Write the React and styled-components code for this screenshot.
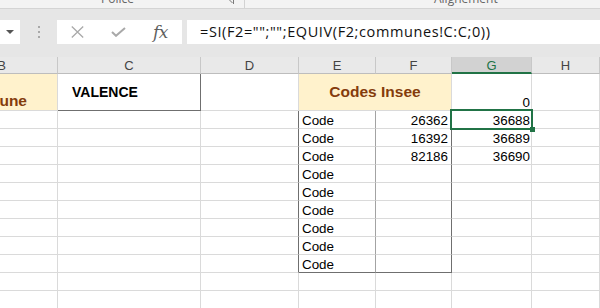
import React from 'react';
import styled, { createGlobalStyle } from 'styled-components';

const GlobalStyle = createGlobalStyle`
  body {
    margin: 0;
    background: #fff;
    font-family: "Liberation Sans", Arial, sans-serif;
  }
`;

const Page = styled.div`
  width: 600px;
  height: 308px;
  overflow: hidden;
  background: #fff;
`;

const RibbonStrip = styled.div`
  display: flex;
  height: 8px;
  background: #f3f3f3;
  border-bottom: 1px solid #d4d4d4;
  overflow: hidden;
`;

const RibbonGroup = styled.div`
  display: flex;
  align-items: flex-start;
  width: ${p => p.$w}px;
  padding-left: ${p => p.$pl}px;
  box-sizing: border-box;
  border-right: ${p => (p.$sep ? '1px solid #d2d2d2' : 'none')};
`;

const GroupLabel = styled.span`
  font-family: "Open Sans", "Liberation Sans", sans-serif;
  font-size: 12px;
  line-height: 12px;
  margin-top: -7px;
  color: #666;
`;

const Launcher = styled.svg`
  margin-left: auto;
  margin-right: 10px;
  margin-top: -2px;
`;

const FormulaArea = styled.div`
  display: flex;
  align-items: flex-start;
  height: 48px;
  padding-top: 11px;
  box-sizing: border-box;
  background: #e6e6e6;
`;

const NameBox = styled.div`
  width: 20px;
  height: 24px;
  background: #fff;
  display: flex;
  align-items: center;
  justify-content: center;
`;

const Grip = styled.div`
  width: 37px;
  height: 24px;
  display: flex;
  flex-direction: column;
  align-items: center;
  justify-content: center;
  gap: 3px;
`;

const GripDot = styled.span`
  width: 2px;
  height: 2px;
  background: #a8a8a8;
`;

const ButtonBox = styled.div`
  display: flex;
  width: 125px;
  height: 24px;
  background: #fff;
`;

const IconSlot = styled.div`
  width: ${p => p.$w}px;
  display: flex;
  align-items: center;
  justify-content: center;
`;

const Fx = styled.span`
  font-family: "DejaVu Serif", "Liberation Serif", serif;
  font-style: italic;
  font-size: 17px;
  line-height: 20px;
  color: #5f5f5f;
  letter-spacing: -0.5px;
`;

const FormulaInput = styled.div`
  flex: 1;
  height: 24px;
  margin-left: 5px;
  background: #fff;
  padding-left: 13px;
  font-family: "Open Sans", "Liberation Sans", sans-serif;
  font-size: 14.5px;
  letter-spacing: 0.6px;
  line-height: 24px;
  color: #111;
  white-space: nowrap;
`;

const Grid = styled.div`
  display: grid;
  grid-template-columns: 112px 143px 98px 77px 76px 80px 1fr;
  grid-template-rows: 17px 37px repeat(11, 18px);
  margin-left: -54px;
`;

const HeaderCell = styled.div`
  box-sizing: border-box;
  display: flex;
  align-items: center;
  justify-content: center;
  font-size: 13px;
  color: ${p => (p.$active ? '#217346' : '#444')};
  background: ${p => (p.$active ? '#d2d2d2' : '#e9e9e9')};
  border-right: 1px solid #c8c8c8;
  border-bottom: ${p => (p.$active ? '2px solid #217346' : '1px solid #bdbdbd')};
  padding-top: 1px;
`;

const Cell = styled.div`
  box-sizing: border-box;
  position: relative;
  display: flex;
  align-items: ${p => p.$valign || 'flex-end'};
  justify-content: ${p => p.$align || 'flex-start'};
  padding: 0 ${p => p.$pr ?? 3}px 0 ${p => p.$pl ?? 3}px;
  border-right: 1px solid ${p => p.$r || '#dadada'};
  border-bottom: 1px solid ${p => p.$b || '#dadada'};
  background: ${p => p.$bg || '#fff'};
  grid-column: ${p => (p.$span ? `span ${p.$span}` : 'auto')};
  font-size: 13.4px;
  line-height: 15px;
  white-space: nowrap;
  color: #000;
`;

const Title = styled.span`
  font-weight: bold;
  font-size: ${p => p.$size}px;
  color: ${p => p.$color};
  line-height: 18px;
`;

const Selection = styled.div`
  position: absolute;
  top: -2px;
  left: -2px;
  right: -2px;
  bottom: -2px;
  border: 2px solid #217346;
  z-index: 2;
`;

const Handle = styled.div`
  position: absolute;
  right: -4px;
  bottom: -4px;
  width: 5px;
  height: 5px;
  background: #217346;
`;

const DARK = '#6f6f6f';
const MID = '#a3a3a3';
const BEIGE = '#fff2cc';
const BROWN = '#843c0c';

const columns = ['B', 'C', 'D', 'E', 'F', 'G', 'H'];

const codes = [
  { f: '26362', g: '36688', sel: true },
  { f: '16392', g: '36689' },
  { f: '82186', g: '36690' },
  {}, {}, {}, {}, {}, {},
];

const App = () => (
  <Page>
    <GlobalStyle />
    <RibbonStrip>
      <RibbonGroup $w={245} $pl={101} $sep>
        <GroupLabel>Police</GroupLabel>
        <Launcher width="7" height="7" viewBox="0 0 7 7">
          <path d="M1 0.5 H6.5 V6" fill="none" stroke="#7a7a7a" strokeWidth="1" />
          <path d="M2 1.5 L5.5 5" stroke="#7a7a7a" strokeWidth="1" />
        </Launcher>
      </RibbonGroup>
      <RibbonGroup $w={355} $pl={189}>
        <GroupLabel>Alignement</GroupLabel>
      </RibbonGroup>
    </RibbonStrip>

    <FormulaArea>
      <NameBox>
        <svg width="8" height="4" viewBox="0 0 8 4">
          <path d="M0 0 H8 L4 4 Z" fill="#555" />
        </svg>
      </NameBox>
      <Grip>
        <GripDot />
        <GripDot />
        <GripDot />
      </Grip>
      <ButtonBox>
        <IconSlot $w={40}>
          <svg width="13" height="12" viewBox="0 0 13 12">
            <path d="M0.8 0.5 L12.2 11.5 M12.2 0.5 L0.8 11.5" stroke="#a9a9a9" strokeWidth="1.3" />
          </svg>
        </IconSlot>
        <IconSlot $w={42}>
          <svg width="15" height="10" viewBox="0 0 15 10">
            <path d="M1 5 L5 8.8 L14 1" fill="none" stroke="#a9a9a9" strokeWidth="2" />
          </svg>
        </IconSlot>
        <IconSlot $w={43}>
          <Fx>fx</Fx>
        </IconSlot>
      </ButtonBox>
      <FormulaInput>=SI(F2="";"";EQUIV(F2;communes!C:C;0))</FormulaInput>
    </FormulaArea>

    <Grid>
      {columns.map(c => (
        <HeaderCell key={c} $active={c === 'G'}>{c}</HeaderCell>
      ))}

      <Cell $bg={BEIGE} $align="flex-end" $pr={30} $valign="flex-end">
        <Title $size={15.5} $color={BROWN}>Commune</Title>
      </Cell>
      <Cell $valign="center" $pl={14} $r={DARK} $b={DARK}>
        <Title $size={14} $color="#000">VALENCE</Title>
      </Cell>
      <Cell />
      <Cell $span={2} $bg={BEIGE} $valign="center" $align="center">
        <Title $size={15.5} $color={BROWN}>Codes Insee</Title>
      </Cell>
      <Cell $align="flex-end" $pr={1}>0</Cell>
      <Cell />

      {codes.map((row, i) => {
        const last = i === codes.length - 1;
        return (
          <React.Fragment key={i}>
            <Cell />
            <Cell />
            <Cell $r={DARK} />
            <Cell $r={MID} $b={last ? DARK : undefined}>Code</Cell>
            <Cell $r={DARK} $b={last ? DARK : undefined} $align="flex-end">{row.f}</Cell>
            <Cell $align="flex-end" $pr={1}>
              {row.g}
              {row.sel && (
                <Selection>
                  <Handle />
                </Selection>
              )}
            </Cell>
            <Cell />
          </React.Fragment>
        );
      })}

      {[0, 1].map(r => (
        <React.Fragment key={`e${r}`}>
          {columns.map(c => <Cell key={c} />)}
        </React.Fragment>
      ))}
    </Grid>
  </Page>
);

export default App;
